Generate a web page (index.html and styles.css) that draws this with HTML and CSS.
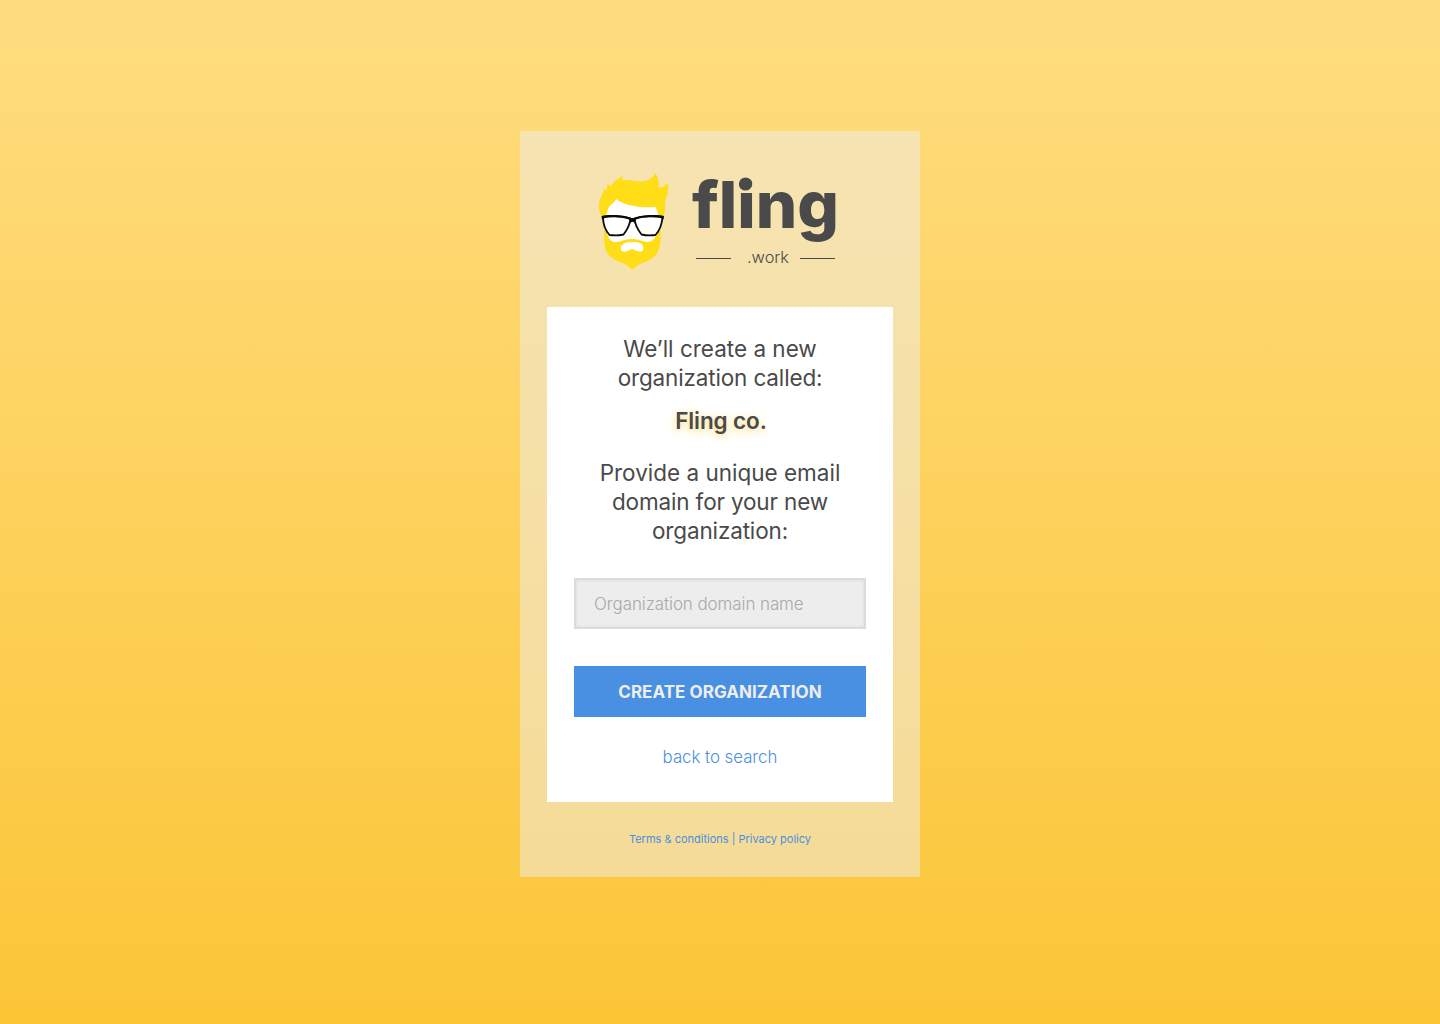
FILE: index.html
```html
<!DOCTYPE html>
<html lang="en">
<head>
<meta charset="utf-8">
<title>fling.work – Create organization</title>
<link rel="stylesheet" href="styles.css">
</head>
<body>
<main class="panel">
  <svg class="logo" width="240" height="100" viewBox="599 172 240 100" role="img" aria-label="fling.work">
    <path fill="#fff" d="M607 198L616 196L650 200L657 207L660 224L657 245L634 254L606 246L604 218Z"/>
    <path fill="#ffde17" d="M602.500 218C598 211 598 202 601.500 196C602.500 193.500 604.500 191.500 603.300 189.400L606.500 189.800C608 188 606.500 186 608 183C608.500 185 609.500 186 611 186C614 182 617.500 178 623.500 176C622 177.500 622 179 622.500 180C633 179 642 184.500 650 179C653 177 655 175 655.300 173C658 177 659.500 181 658.300 187.500C662 188 665.500 186 667.200 182.500C669 188 668 194 665.800 199C664.500 205 666 211 663 218L660 217C658 213 656 210 656 207C644 208 627 207 616 199C615 203 608 205 607.500 211C607 214 605.500 216 604.500 218Z"/>
    <path fill="#ffde17" d="M603.500 230L606.500 232C608 238 611 243 616.500 242C621 241.500 627 238.500 632 239C638 238.500 643 242 648 242C654 241.500 656 236 658.500 231L661 230C659.500 238 661.500 241 659.800 246C658 256 651 260 643 262.700C638 264.500 635 267 632.300 270C629.500 267 627 264.500 622 262.700C614 260 607 256 605 247C603.500 242 605 238 603.500 230Z"/>
    <path fill="#fff" d="M632 242.500C637 241.200 641.500 243 643 246C644 248.500 643 251 641 251.500C639 252 638 250.500 635 250.500C633.500 248.800 630.500 248.800 629 250.500C627 250.500 625.500 252.500 623 251.500C621 251 620.300 249 621 246.500C622.500 243.500 627 241.200 632 242.500Z"/>
    <path fill="#fff" stroke="#0a0a0a" stroke-width="1.800" stroke-linejoin="round" d="M603 217C611 215 623 216 630.500 218.500C630 225 627 230 623.500 234.500Q617 236 609.500 235C605 230 603 224 603 217ZM662.500 217C654 215 642 216 634.500 218.500C635 225 638 230 641.500 234.500Q648 236 655.500 235C660 230 662 224 662.500 217Z"/>
    <path fill="#0a0a0a" d="M601.500 216C610 214 624 215 630 217.500Q632.500 218.500 635 217.500C642 215 655 214 664 216L663.500 219.500L661 218C652 216.500 642 217 636 219.500L634.500 223Q632.500 220.500 630.500 223L629 219.500C622 217 612 216.500 604.500 218L602 219.500Z"/>
    <text class="wordmark" x="692" y="228" textLength="147" lengthAdjust="spacingAndGlyphs">fling</text>
    <circle cx="745.500" cy="184" r="6.600" fill="#4a4a4a"/>
    <path stroke="#4a4a4a" d="M696 258.500h35M800 258.500h35"/>
    <text class="suffix" x="747" y="263" textLength="42" lengthAdjust="spacingAndGlyphs">.work</text>
  </svg>
  <form class="card">
    <p class="lead">We’ll create a new<br><span class="tight">organization called:</span></p>
    <p class="name">Fling co.</p>
    <p class="lead">Provide a unique email<br><span class="tight">domain for your new<br>organization:</span></p>
    <input class="field" type="text" placeholder="Organization domain name" aria-label="Organization domain name">
    <button class="submit" type="button">CREATE ORGANIZATION</button>
    <a class="back">back to search</a>
  </form>
  <footer class="legal"><a>Terms &amp; conditions</a> | <a>Privacy policy</a></footer>
</main>
</body>
</html>
```
FILE: styles.css
```css
* { box-sizing: border-box; }
body {
  margin: 0;
  min-height: 1024px;
  padding-top: 131px;
  background: linear-gradient(#ffdd80, #fbc536);
  font-family: Inter, "Liberation Sans", sans-serif;
  color: #4a4a4a;
}
.panel {
  width: 400px;
  height: 746px;
  margin: 0 auto;
  padding: 41px 27px 0;
  background: rgba(238, 238, 238, .5);
  display: flex;
  flex-direction: column;
}
.logo { display: block; margin-left: 52px; overflow: visible; }
.wordmark { font-size: 65px; font-weight: 800; fill: #4a4a4a; }
.suffix { font-size: 16.5px; font-weight: 300; fill: #4a4a4a; }
.card {
  height: 495px;
  margin-top: 35px;
  padding: 27px 27px 0;
  background: #fff;
  display: flex;
  flex-direction: column;
  text-align: center;
}
.lead { margin: 0; font-size: 22.5px; line-height: 29px; white-space: nowrap; }
.tight { letter-spacing: -.15px; }
.name {
  margin: 14px 0 23px 2px;
  font-size: 22.5px;
  font-weight: 600;
  line-height: 29px;
  letter-spacing: -.1px;
  text-shadow: 0 2px 8px #ffd460;
}
.field {
  height: 51px;
  margin: 33px 0 37px;
  padding: 0 18px;
  border: 2px solid #dcdcdc;
  border-radius: 0;
  background: #ededed;
  box-shadow: inset 0 0 3px #d8d8d8;
  font: 300 17px Inter, "Liberation Sans", sans-serif;
  letter-spacing: -.1px;
}
.field::placeholder { color: #a9a9a9; opacity: 1; }
.submit {
  height: 51px;
  padding: 0;
  border: 0;
  background: #4a90e2;
  color: #eee;
  font: 700 17px Inter, "Liberation Sans", sans-serif;
  letter-spacing: .05px;
}
.back { margin-top: 28px; font-size: 16.8px; font-weight: 300; line-height: 24px; color: #4a90e2; }
.legal { margin-top: 29px; font-size: 11px; line-height: 16px; text-align: center; color: #4a90e2; }
```
